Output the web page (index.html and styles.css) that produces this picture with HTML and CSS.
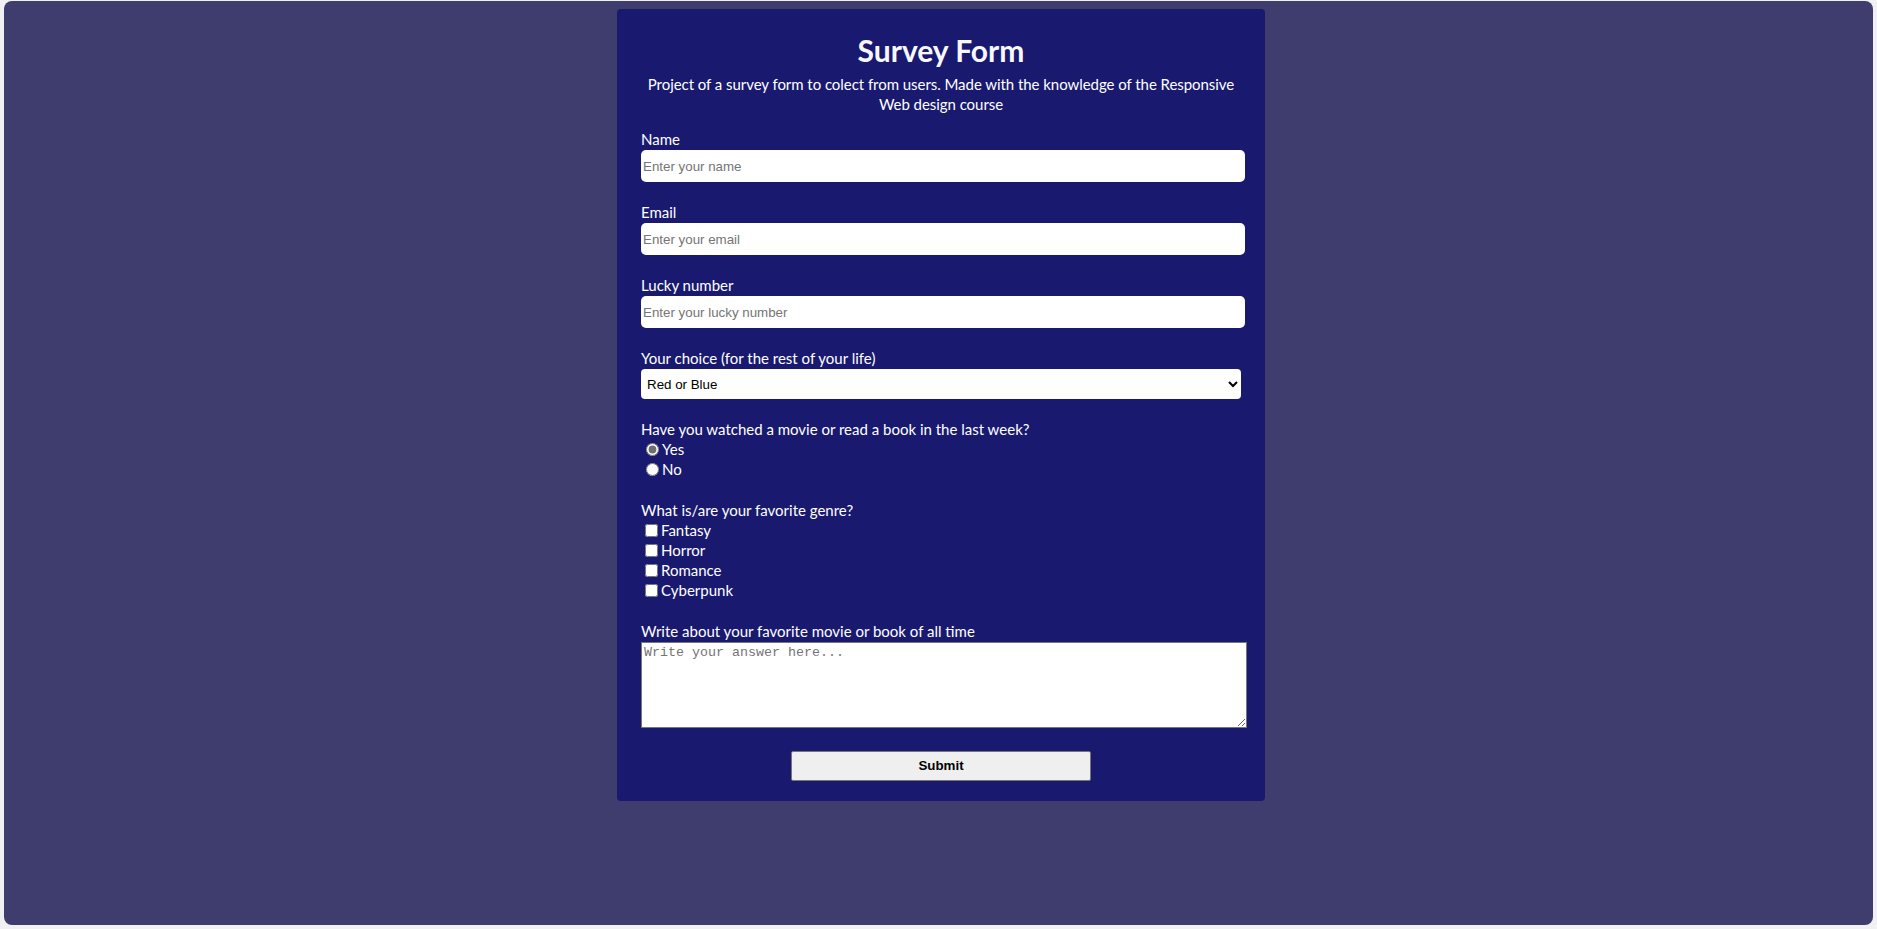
FILE: index.html
```html
<!DOCTYPE html>
<html lang="en">
<head>
<meta charset="utf-8">
<title>Survey Form</title>
<link rel="stylesheet" href="styles.css">
</head>
<body>
<div class="frame">
  <main class="card">
    <h1 class="title">Survey Form</h1>
    <p class="subtitle">Project of a survey form to colect from users. Made with the knowledge of the Responsive Web design course</p>
    <form class="form">
      <div class="group">
        <label class="label" for="name">Name</label>
        <input class="field" id="name" type="text" placeholder="Enter your name">
      </div>
      <div class="group">
        <label class="label" for="email">Email</label>
        <input class="field" id="email" type="email" placeholder="Enter your email">
      </div>
      <div class="group">
        <label class="label" for="number">Lucky number</label>
        <input class="field" id="number" type="number" placeholder="Enter your lucky number">
      </div>
      <div class="group">
        <label class="label" for="choice">Your choice (for the rest of your life)</label>
        <select class="dropdown" id="choice">
          <option>Red or Blue</option>
          <option>Red</option>
          <option>Blue</option>
        </select>
      </div>
      <div class="group">
        <p class="label">Have you watched a movie or read a book in the last week?</p>
        <label class="option"><input class="radio" type="radio" name="watched" value="yes" checked>Yes</label>
        <label class="option"><input class="radio" type="radio" name="watched" value="no">No</label>
      </div>
      <div class="group">
        <p class="label">What is/are your favorite genre?</p>
        <label class="option"><input class="check" type="checkbox" value="fantasy">Fantasy</label>
        <label class="option"><input class="check" type="checkbox" value="horror">Horror</label>
        <label class="option"><input class="check" type="checkbox" value="romance">Romance</label>
        <label class="option"><input class="check" type="checkbox" value="cyberpunk">Cyberpunk</label>
      </div>
      <div class="group group-last">
        <label class="label" for="story">Write about your favorite movie or book of all time</label>
        <textarea class="area" id="story" placeholder="Write your answer here..."></textarea>
      </div>
      <div class="actions">
        <button class="submit" type="submit">Submit</button>
      </div>
    </form>
  </main>
</div>
</body>
</html>
```

FILE: styles.css
```css
html, body {
  margin: 0;
  padding: 0;
}

body {
  background: #f1f1f4;
  font-family: Lato, "Noto Sans", sans-serif;
  color: #ffffff;
}

.frame {
  margin: 1px 4px 0 4px;
  height: 924px;
  box-sizing: border-box;
  padding: 8px 0 0 5px;
  background: #3e3d6e;
  border-radius: 8px;
  display: flex;
  flex-direction: column;
  align-items: center;
}

.card {
  width: 648px;
  box-sizing: border-box;
  padding: 21px 24px 20px 24px;
  background: #191970;
  border-radius: 4px;
}

.title {
  margin: 0;
  font-size: 30px;
  line-height: 40px;
  font-weight: 700;
  text-align: center;
  color: #f8f8ff;
}

.subtitle {
  margin: 5px 0 15px 0;
  font-size: 15px;
  line-height: 19.5px;
  letter-spacing: -0.05px;
  text-align: center;
}

.form {
  margin: 0;
}

.group {
  margin-bottom: 20px;
}

.group-last {
  margin-bottom: 23px;
}

.label {
  display: block;
  margin: 0;
  font-size: 15px;
  line-height: 20px;
}

.field {
  display: block;
  box-sizing: border-box;
  width: calc(100% + 4px);
  height: 32px;
  padding: 0 2px;
  margin: 1px 0 0 0;
  border: 0;
  border-radius: 5px;
  background: #ffffff;
  font-family: "Liberation Sans", Arial, sans-serif;
  font-size: 13.333px;
}

.field::-webkit-outer-spin-button,
.field::-webkit-inner-spin-button {
  -webkit-appearance: none;
  margin: 0;
}

.dropdown {
  display: block;
  width: 100%;
  height: 30px;
  margin: 1px 0 0 0;
  padding: 0 2px;
  border: 0;
  border-radius: 4px;
  background: #ffffff;
  color: #000000;
  font-family: "Liberation Sans", Arial, sans-serif;
  font-size: 13.333px;
}

.option {
  display: block;
  font-size: 15px;
  line-height: 20.3px;
}

.radio {
  margin: 0 3px 0 5px;
  width: 13px;
  height: 13px;
  vertical-align: -1px;
  accent-color: #6f6f6f;
}

.check {
  margin: 0 3px 0 4px;
  width: 13px;
  height: 13px;
  vertical-align: -1px;
}

.area {
  display: block;
  box-sizing: border-box;
  width: calc(100% + 6px);
  height: 86px;
  margin: 1px 0 0 0;
  padding: 2px;
  border: 1px solid #767676;
  background: #ffffff;
  font-family: "Liberation Mono", "DejaVu Sans Mono", monospace;
  font-size: 13.333px;
}

.actions {
  display: flex;
  justify-content: center;
}

.submit {
  width: 300px;
  height: 30px;
  margin: 0;
  border: 1px solid #767676;
  border-radius: 2px;
  background: #efefef;
  color: #000000;
  font-family: "Liberation Sans", Arial, sans-serif;
  font-size: 13.333px;
  font-weight: 700;
}
```
